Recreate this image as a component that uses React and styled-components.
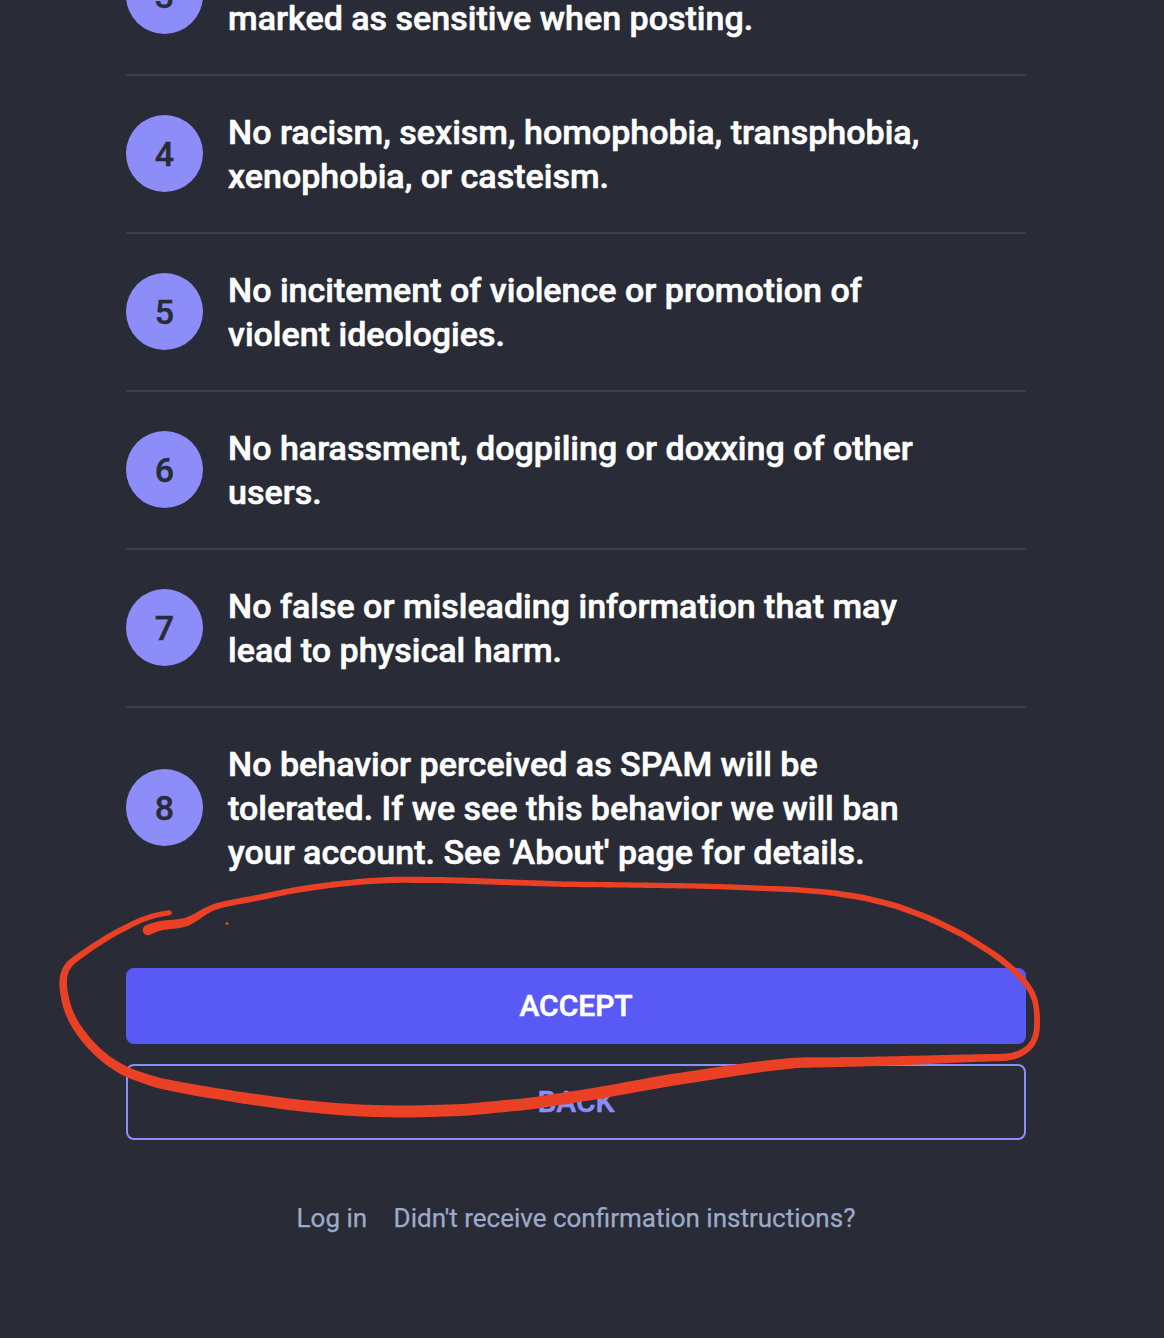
import React from "react";
import styled, { createGlobalStyle } from "styled-components";

const GlobalStyle = createGlobalStyle`
  *, *::before, *::after { box-sizing: border-box; }
  body {
    margin: 0;
    background: #292b36;
    font-family: Roboto, "Liberation Sans", sans-serif;
  }
`;

const Page = styled.div`
  position: relative;
  height: 1338px;
  overflow: hidden;
  background: #292b36;
`;

const Column = styled.main`
  display: flex;
  flex-direction: column;
  width: 900px;
  margin: -82px 0 0 126px;
`;

const RuleList = styled.ol`
  list-style: none;
  margin: 0;
  padding: 0;
`;

const Rule = styled.li`
  display: flex;
  align-items: center;
  gap: 25px;
  padding: 34px 0;
  border-bottom: 2px solid #393f4f;

  &:last-child {
    border-bottom: 0;
  }
`;

const RuleNumber = styled.span`
  flex: none;
  display: flex;
  align-items: center;
  justify-content: center;
  width: 77px;
  height: 77px;
  margin-bottom: 1px;
  border-radius: 50%;
  background: #8c8df8;
  color: #292b36;
  font-size: 34px;
  font-weight: 500;
  line-height: 44px;
  -webkit-text-stroke: 0.4px currentColor;
`;

const RuleText = styled.span`
  color: #fff;
  font-size: 34px;
  font-weight: 500;
  line-height: 44px;
  letter-spacing: 0.01px;
  white-space: pre-line;
  -webkit-text-stroke: 0.6px currentColor;
`;

const Actions = styled.div`
  display: flex;
  flex-direction: column;
  gap: 20px;
  margin-top: 60px;
`;

const Button = styled.button`
  height: 76px;
  padding: 0;
  border: 2px solid ${(p) => (p.$outlined ? "#8c8df8" : "#595af6")};
  border-radius: 8px;
  background: ${(p) => (p.$outlined ? "transparent" : "#595af6")};
  color: ${(p) => (p.$outlined ? "#8c8df8" : "#fff")};
  font-family: inherit;
  font-size: 30px;
  font-weight: 500;
  line-height: 44px;
  text-transform: uppercase;
  -webkit-text-stroke: 0.6px currentColor;
`;

const Links = styled.nav`
  display: flex;
  justify-content: center;
  gap: 26.5px;
  margin-top: 60px;
`;

const Link = styled.a`
  color: #9dabc8;
  font-size: 26px;
  line-height: 36px;
  -webkit-text-stroke: 0.25px currentColor;
`;

const Marker = styled.svg`
  position: absolute;
  left: 0;
  top: 0;
  pointer-events: none;
`;

const rules = [
  [3, "\nmarked as sensitive when posting."],
  [4, "No racism, sexism, homophobia, transphobia,\nxenophobia, or casteism."],
  [5, "No incitement of violence or promotion of\nviolent ideologies."],
  [6, "No harassment, dogpiling or doxxing of other\nusers."],
  [7, "No false or misleading information that may\nlead to physical harm."],
  [8, "No behavior perceived as SPAM will be\ntolerated. If we see this behavior we will ban\nyour account. See 'About' page for details."],
];

// Pen samples: x, y, stroke width
const pen = [
  [148, 930, 10.5], [154, 927.2, 10], [160, 925.4, 9.4], [173, 924.2, 9], [181, 923.6, 9], [188, 921.8, 8.6],
  [200, 914.5, 7], [211.7, 907.6, 6.2], [226.7, 903.6, 6], [256.7, 898, 6],
  [290, 891, 6], [315, 887, 6], [340, 883.8, 6], [367, 881.2, 6], [396.7, 879.7, 6.2], [446.7, 880.1, 6],
  [496.7, 881.8, 6], [563.3, 884.2, 5.5], [630, 885, 5.3], [696.7, 886, 5.3],
  [730, 887, 5.3], [796.7, 889.7, 5.5], [830, 892.5, 5.7], [863.3, 897.6, 6],
  [896.7, 906, 6], [930, 918.5, 6], [963.3, 934.8, 6], [996.7, 956, 6],
  [1013.3, 969.6, 6], [1026.7, 984, 6], [1034, 996.5, 5.8], [1036.9, 1010, 5.6],
  [1037, 1030, 6], [1034.4, 1041, 6], [1027, 1050, 6.3], [1012, 1057, 7],
  [980, 1058, 7.5], [956.7, 1058.7, 8], [913.3, 1060.3, 9], [863.3, 1061.7, 9.5],
  [796.7, 1062.7, 10.5], [763.3, 1066.3, 11], [730, 1071, 11.5],
  [663.3, 1081.3, 11.8], [596.7, 1093.4, 11.8],
  [530, 1103.7, 11.8], [463.3, 1110, 12], [406.7, 1111.7, 12],
  [363.3, 1110.7, 12], [330, 1108.5, 11.8], [290, 1104.5, 11.5],
  [240, 1097.5, 11.2], [190, 1089.3, 11], [156.7, 1082.6, 10.5], [126.7, 1072.3, 9.8],
  [106.7, 1060, 9], [90, 1044.7, 8.6], [75, 1025, 8.3], [66.7, 1006.7, 8],
  [63, 986.7, 7.7], [63.4, 973.3, 7.3], [68.5, 964.2, 6.7], [90, 948.4, 6],
  [113.3, 933.8, 5.8], [140, 920.3, 5.5], [156.7, 914.8, 5.2], [169.3, 912.7, 5],
];

// Evenly spaced samples along the pen's polyline
function resample(points, spacing) {
  const out = [];
  for (let i = 0; i < points.length - 1; i++) {
    const a = points[i];
    const b = points[i + 1];
    const count = Math.max(1, Math.round(Math.hypot(b[0] - a[0], b[1] - a[1]) / spacing));
    for (let s = 0; s < count; s++) {
      out.push(a.map((v, k) => v + ((b[k] - v) * s) / count));
    }
  }
  out.push(points[points.length - 1]);
  return out;
}

const relax = (line, factor) =>
  line.map((p, i) =>
    i === 0 || i === line.length - 1
      ? p
      : p.map((v, k) => v + factor * ((line[i - 1][k] + line[i + 1][k]) / 2 - v))
  );

function ribbon(points) {
  let line = resample(points, 3);
  for (let pass = 0; pass < 50; pass++) {
    line = relax(relax(line, 0.5), -0.5);
  }
  for (let pass = 0; pass < 3; pass++) {
    line = relax(line, 0.5);
  }
  const left = [];
  const right = [];
  line.forEach(([x, y, w], i) => {
    const p = line[Math.max(i - 1, 0)];
    const n = line[Math.min(i + 1, line.length - 1)];
    const len = Math.hypot(n[0] - p[0], n[1] - p[1]) || 1;
    const nx = (-(n[1] - p[1]) / len) * (w / 2);
    const ny = ((n[0] - p[0]) / len) * (w / 2);
    left.push(`${(x + nx).toFixed(2)},${(y + ny).toFixed(2)}`);
    right.unshift(`${(x - nx).toFixed(2)},${(y - ny).toFixed(2)}`);
  });
  return `M${left.concat(right).join("L")}Z`;
}

const markerPath = ribbon(pen);

function PenMark() {
  const tips = [pen[0], pen[pen.length - 1]];
  return (
    <Marker width="1164" height="1338" viewBox="0 0 1164 1338" fill="#ea4025" aria-hidden="true">
      <path d={markerPath} />
      {tips.map(([x, y, w]) => (
        <circle key={x} cx={x} cy={y} r={w / 2} />
      ))}
      <circle cx="227" cy="923.4" r="1.5" />
    </Marker>
  );
}

export default function App() {
  return (
    <Page>
      <GlobalStyle />
      <Column>
        <RuleList>
          {rules.map(([number, text]) => (
            <Rule key={number}>
              <RuleNumber>{number}</RuleNumber>
              <RuleText>{text}</RuleText>
            </Rule>
          ))}
        </RuleList>
        <Actions>
          <Button>Accept</Button>
          <Button $outlined>Back</Button>
        </Actions>
        <Links>
          <Link>Log in</Link>
          <Link>Didn't receive confirmation instructions?</Link>
        </Links>
      </Column>
      <PenMark />
    </Page>
  );
}
